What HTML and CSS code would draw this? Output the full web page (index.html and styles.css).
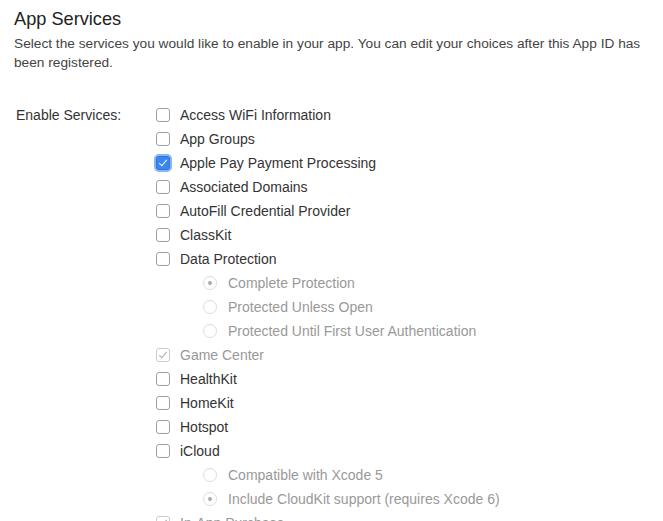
FILE: index.html
```html
<!DOCTYPE html>
<html lang="en">
<head>
    <meta charset="UTF-8">
    <title>App Services</title>
    <link rel="stylesheet" href="styles.css">
</head>
<body>
    <div id="container">
        <h2>App Services</h2>
        <p class="intro">Select the services you would like to enable in your app. You can edit your choices after this App ID has been registered.</p>

        <div class="services">
            <div class="services-label">Enable Services:</div>
            <ul class="service-list">
                <li class="service"><span class="box"></span>Access WiFi Information</li>
                <li class="service"><span class="box"></span>App Groups</li>
                <li class="service"><span class="box checked"></span>Apple Pay Payment Processing</li>
                <li class="service"><span class="box"></span>Associated Domains</li>
                <li class="service"><span class="box"></span>AutoFill Credential Provider</li>
                <li class="service"><span class="box"></span>ClassKit</li>
                <li class="service"><span class="box"></span>Data Protection</li>
                <li class="option"><span class="radio selected"></span>Complete Protection</li>
                <li class="option"><span class="radio"></span>Protected Unless Open</li>
                <li class="option"><span class="radio"></span>Protected Until First User Authentication</li>
                <li class="service disabled"><span class="box ticked"></span>Game Center</li>
                <li class="service"><span class="box"></span>HealthKit</li>
                <li class="service"><span class="box"></span>HomeKit</li>
                <li class="service"><span class="box"></span>Hotspot</li>
                <li class="service"><span class="box"></span>iCloud</li>
                <li class="option"><span class="radio"></span>Compatible with Xcode 5</li>
                <li class="option"><span class="radio selected"></span>Include CloudKit support (requires Xcode 6)</li>
                <li class="service disabled"><span class="box ticked"></span>In-App Purchase</li>
            </ul>
        </div>
    </div>
</body>
</html>
```

FILE: styles.css
```css
body {
    font-family: "Helvetica Neue", "Liberation Sans", Arial, sans-serif;
    color: #333;
    background-color: #fff;
    margin: 0;
    padding: 0;
}
#container {
    padding: 7px 14px 0 14px;
}
h2 {
    font-size: 18.2px;
    font-weight: normal;
    color: #222;
    margin: 0;
    line-height: 24px;
}
.intro {
    font-size: 13.7px;
    line-height: 19px;
    color: #444;
    margin: 3px 0 0 0;
}
.services {
    display: flex;
    margin-top: 31px;
}
.services-label {
    width: 140px;
    padding-left: 2px;
    font-size: 14px;
    line-height: 24px;
    color: #333;
}
.service-list {
    list-style: none;
    margin: 0;
    padding: 0;
}
.service-list li {
    display: flex;
    align-items: center;
    height: 24px;
    font-size: 14px;
    color: #333;
}
.service-list li.option {
    padding-left: 47px;
    color: #999;
}
.service-list li.disabled {
    color: #999;
}
.box {
    width: 12px;
    height: 12px;
    border: 1px solid #a0a0a0;
    border-radius: 3px;
    margin-right: 10px;
    position: relative;
    flex-shrink: 0;
}
.box.checked {
    background-color: #3a87f2;
    border-color: #2f74d6;
    box-shadow: 0 0 0 2px #8ab6f5;
}
.box.checked::after,
.box.ticked::after {
    content: "";
    position: absolute;
    left: 4px;
    top: 1px;
    width: 3px;
    height: 7px;
    border: solid #fff;
    border-width: 0 1.5px 1.5px 0;
    transform: rotate(40deg);
}
.box.ticked {
    border-color: #ccc;
}
.box.ticked::after {
    border-color: #aaa;
}
.radio {
    width: 12px;
    height: 12px;
    border: 1px solid #ddd;
    border-radius: 50%;
    margin-right: 11px;
    position: relative;
    flex-shrink: 0;
}
.radio.selected::after {
    content: "";
    position: absolute;
    left: 4px;
    top: 4px;
    width: 4px;
    height: 4px;
    border-radius: 50%;
    background-color: #aaa;
}
```
